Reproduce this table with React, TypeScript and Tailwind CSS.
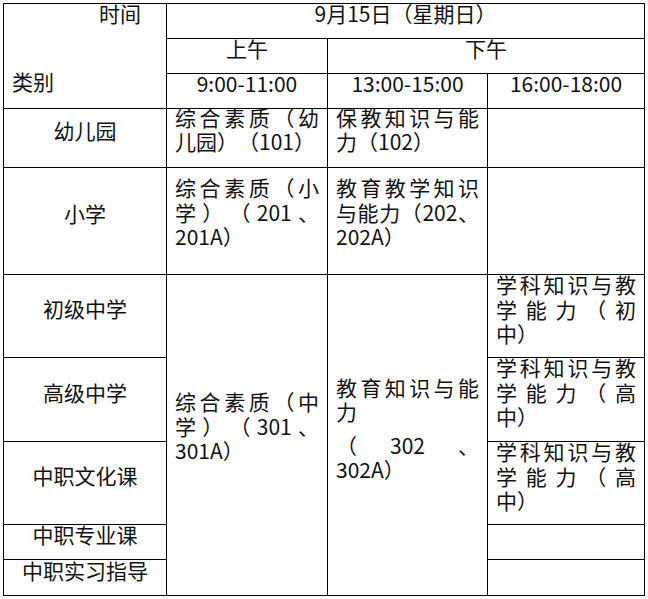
import React from "react";

const J = ({ children }: { children: React.ReactNode }) => (
  <div className="text-justify [text-align-last:justify]">{children}</div>
);
const L = ({ children }: { children: React.ReactNode }) => <div>{children}</div>;

const mid = "border border-black px-2 p-0 align-middle";
const midC = "border border-black px-2 p-0 align-middle text-center";
const top = "border border-black px-2 p-0 align-top";

const Up = ({ children }: { children?: React.ReactNode }) => (
  <div className="-mt-[15px]">{children}</div>
);

export default function App() {
  return (
    <div className="bg-white w-[648px] h-[599px] p-[3px]">
      <table className="table-fixed border-collapse w-[641px] text-[21px] leading-[24.5px] text-[#111] font-['Noto_Sans_CJK_SC',sans-serif] [text-spacing-trim:space-all]">
        <colgroup>
          <col className="w-[163px]" />
          <col className="w-[161px]" />
          <col className="w-[160px]" />
          <col className="w-[157px]" />
        </colgroup>
        <tbody>
          <tr className="h-[35px]">
            <td rowSpan={3} className="border border-black p-0 align-top">
              <div className="-mt-[3px]">
                <div className="text-right pr-[25px]">时间</div>
                <div className="pl-2 mt-[43px]">类别</div>
              </div>
            </td>
            <td colSpan={3} className={midC}>
              <Up>9月15日（星期日）</Up>
            </td>
          </tr>
          <tr className="h-[35px]">
            <td className={midC}>
              <Up>上午</Up>
            </td>
            <td colSpan={2} className={midC}>
              <Up>下午</Up>
            </td>
          </tr>
          <tr className="h-[35px]">
            <td className={midC}>
              <Up>9:00-11:00</Up>
            </td>
            <td className={midC}>
              <Up>13:00-15:00</Up>
            </td>
            <td className={midC}>
              <Up>16:00-18:00</Up>
            </td>
          </tr>
          <tr className="h-[59px]">
            <td className={midC}>
              <Up>幼儿园</Up>
            </td>
            <td className={mid}>
              <div className="-mt-[18px]">
                <J>综合素质（幼</J>
                <L>儿园）（101）</L>
              </div>
            </td>
            <td className={mid}>
              <div className="-mt-[18px]">
                <J>保教知识与能</J>
                <L>力（102）</L>
              </div>
            </td>
            <td className={mid}></td>
          </tr>
          <tr className="h-[107px]">
            <td className={midC}>
              <Up>小学</Up>
            </td>
            <td className={mid}>
              <div className="-mt-[18px]">
                <J>综合素质（小</J>
                <J>学）（201、</J>
                <L>201A）</L>
              </div>
            </td>
            <td className={mid}>
              <div className="-mt-[18px]">
                <J>教育教学知识</J>
                <J>与能力（202、</J>
                <L>202A）</L>
              </div>
            </td>
            <td className={mid}></td>
          </tr>
          <tr className="h-[83px]">
            <td className={midC}>
              <Up>初级中学</Up>
            </td>
            <td rowSpan={5} className={mid}>
              <div className="-mt-[18px]">
                <J>综合素质（中</J>
                <J>学）（301、</J>
                <L>301A）</L>
              </div>
            </td>
            <td rowSpan={5} className={mid}>
              <div className="-mt-[14px]">
                <J>教育知识与能</J>
                <L>力</L>
                <div className="mt-[9px]">
                  <J>（302、</J>
                  <L>302A）</L>
                </div>
              </div>
            </td>
            <td className={top}>
              <div className="-mt-[3px]">
                <J>学科知识与教</J>
                <J>学能力（初</J>
                <L>中）</L>
              </div>
            </td>
          </tr>
          <tr className="h-[84px]">
            <td className={midC}>
              <Up>高级中学</Up>
            </td>
            <td className={top}>
              <div className="-mt-[3px]">
                <J>学科知识与教</J>
                <J>学能力（高</J>
                <L>中）</L>
              </div>
            </td>
          </tr>
          <tr className="h-[83px]">
            <td className={midC}>
              <Up>中职文化课</Up>
            </td>
            <td className={top}>
              <div className="-mt-[3px]">
                <J>学科知识与教</J>
                <J>学能力（高</J>
                <L>中）</L>
              </div>
            </td>
          </tr>
          <tr className="h-[35px]">
            <td className={midC}>
              <Up>中职专业课</Up>
            </td>
            <td className={mid}></td>
          </tr>
          <tr className="h-[36px]">
            <td className={midC}>
              <Up>中职实习指导</Up>
            </td>
            <td className={mid}></td>
          </tr>
        </tbody>
      </table>
    </div>
  );
}
